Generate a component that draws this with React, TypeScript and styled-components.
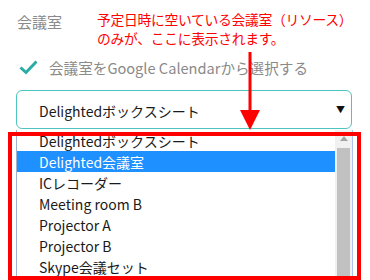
import React from "react";
import styled, { createGlobalStyle } from "styled-components";

const Global = createGlobalStyle`
  html, body { margin: 0; padding: 0; background: #fff; }
  body { width: 370px; height: 280px; overflow: hidden; }
`;

const Page = styled.div`
  position: relative;
  width: 370px;
  height: 280px;
  overflow: hidden;
  padding: 10px 0 0 16px;
  box-sizing: border-box;
  font-family: "Noto Sans CJK JP", "Noto Sans", sans-serif;
`;

const Header = styled.div`
  display: flex;
  align-items: flex-start;
  height: 38px;
`;

const Label = styled.div`
  width: 80px;
  padding-left: 1px;
  padding-top: 2px;
  font-size: 15px;
  line-height: 20px;
  color: #8a8a8a;
`;

const Note = styled.div`
  font-size: 13.8px;
  letter-spacing: -0.3px;
  line-height: 19px;
  color: #ff0000;
  white-space: nowrap;
`;

const CheckRow = styled.div`
  display: flex;
  align-items: center;
  gap: 11px;
  height: 22px;
  margin-top: 8px;
  padding-left: 3px;
  font-size: 14.6px;
  color: #8a8a8a;
`;

const Select = styled.div`
  display: flex;
  align-items: center;
  justify-content: space-between;
  box-sizing: border-box;
  width: 336px;
  height: 39px;
  margin-top: 12px;
  padding: 3px 6px 0 22px;
  border: 1px solid #4ec4c0;
  border-radius: 6px;
  font-family: "Noto Sans CJK JP", sans-serif;
  font-size: 14px;
  color: #1a1a1a;
`;

const Caret = styled.span`
  font-size: 9px;
  color: #111;
  margin-top: -3px;
`;

const ListBox = styled.div`
  display: flex;
  box-sizing: border-box;
  width: 337px;
  height: 150px;
  margin-top: 1px;
  border-left: 1px solid #9fb2cf;
  border-right: 1px solid #a9c3ea;
`;

const Items = styled.div`
  flex: 1;
  display: flex;
  flex-direction: column;
`;

const Item = styled.div<{ $selected?: boolean }>`
  box-sizing: border-box;
  height: 21px;
  line-height: 19px;
  padding: 2px 0 0 22px;
  font-family: "Noto Sans CJK JP", sans-serif;
  font-size: 14px;
  white-space: nowrap;
  color: ${(p) => (p.$selected ? "#fff" : "#1a1a1a")};
  background: ${(p) => (p.$selected ? "#1e90ff" : "transparent")};
`;

const Scrollbar = styled.div`
  width: 17px;
  display: flex;
  flex-direction: column;
  background: #f1f1f1;
`;

const ScrollArrow = styled.div`
  height: 17px;
  display: flex;
  align-items: center;
  justify-content: center;
`;

const Thumb = styled.div`
  flex: 1;
  margin: 1px 2px 0 2px;
  background: #c1c1c1;
`;

const ArrowMark = styled.svg`
  position: absolute;
  left: 240px;
  top: 52px;
`;

const RedFrame = styled.div`
  position: absolute;
  left: 8px;
  top: 132px;
  width: 353px;
  height: 148px;
  box-sizing: border-box;
  border: 4px solid #ff0000;
  pointer-events: none;
`;

const items = [
  "Delightedボックスシート",
  "Delighted会議室",
  "ICレコーダー",
  "Meeting room B",
  "Projector A",
  "Projector B",
  "Skype会議セット",
];

export default function App() {
  return (
    <>
      <Global />
      <Page>
        <Header>
          <Label>会議室</Label>
          <Note>
            予定日時に空いている会議室（リソース）
            <br />
            のみが、ここに表示されます。
          </Note>
        </Header>
        <CheckRow>
          <svg width="19" height="15" viewBox="0 0 19 15">
            <path d="M1.5 7.5 L7 12.5 L17.5 1.5" fill="none" stroke="#2aaca4" strokeWidth="3" />
          </svg>
          <span>会議室をGoogle Calendarから選択する</span>
        </CheckRow>
        <Select>
          <span>Delightedボックスシート</span>
          <Caret>▼</Caret>
        </Select>
        <ListBox>
          <Items>
            {items.map((t, i) => (
              <Item key={t} $selected={i === 1}>
                {t}
              </Item>
            ))}
          </Items>
          <Scrollbar>
            <ScrollArrow>
              <svg width="8" height="5" viewBox="0 0 8 5">
                <path d="M0 5 L4 0 L8 5 Z" fill="#a3a3a3" />
              </svg>
            </ScrollArrow>
            <Thumb />
          </Scrollbar>
        </ListBox>
        <ArrowMark width="20" height="80" viewBox="0 0 20 80">
          <rect x="8.5" y="0" width="3" height="60" fill="#ff0000" />
          <path d="M0 58 L20 58 L10 78 Z" fill="#ff0000" />
        </ArrowMark>
        <RedFrame />
      </Page>
    </>
  );
}
